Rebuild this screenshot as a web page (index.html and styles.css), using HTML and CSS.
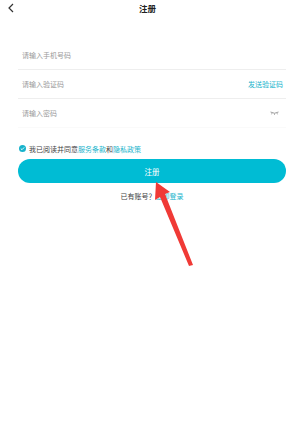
FILE: index.html
```html
<!DOCTYPE html>
<html lang="zh">
<head>
<meta charset="utf-8">
<link rel="stylesheet" href="styles.css">
</head>
<body>
<div class="page">
  <header class="topbar">
    <svg class="back" width="8" height="10" viewBox="0 0 8 10"><path d="M6 1 L2 5 L6 9" fill="none" stroke="#333" stroke-width="1.2"/></svg>
    <div class="title">注册</div>
  </header>
  <div class="form">
    <div class="row">请输入手机号码</div>
    <div class="row"><span>请输入验证码</span><span class="link">发送验证码</span></div>
    <div class="row nob"><span>请输入密码</span>
      <svg class="eye" width="9" height="4" viewBox="0 0 9 4"><path d="M0.5 1 Q4.5 3.5 8.5 1 M2 2.2 L1.5 3.3 M4.5 2.8 L4.5 3.8 M7 2.2 L7.5 3.3" fill="none" stroke="#777" stroke-width="0.7"/></svg>
    </div>
    <div class="agree">
      <svg class="check" width="7" height="7" viewBox="0 0 7 7"><circle cx="3.5" cy="3.5" r="3.5" fill="#17b3cc"/><path d="M1.8 3.6 L3 4.7 L5.2 2.4" fill="none" stroke="#fff" stroke-width="0.9"/></svg>
      <span>我已阅读并同意<span class="link">服务条款</span>和<span class="link">隐私政策</span></span>
    </div>
    <button class="btn">注册</button>
    <div class="login">已有账号？<span class="link">立即登录</span></div>
  </div>
  <svg class="arrow" width="295" height="443" viewBox="0 0 295 443"><path d="M156 182 L170 192 L165 194 L193 265 L189 266 L160 197 L155 200 Z" fill="#f03a36"/></svg>
</div>
</body>
</html>
```
FILE: styles.css
```css
* { box-sizing: border-box; }
body { margin: 0; background: #fff; font-family: "Noto Sans CJK SC", "Noto Sans", sans-serif; }
.page { position: relative; width: 295px; height: 443px; overflow: hidden; }
.topbar { position: relative; height: 17px; display: flex; align-items: center; justify-content: center; }
.back { position: absolute; left: 7px; top: 3px; }
.title { font-size: 8.5px; font-weight: bold; color: #222; line-height: 17px; }
.form { padding: 24px 9px 0 18px; }
.row { height: 29px; display: flex; align-items: center; justify-content: space-between; border-bottom: 1px solid #eeeeee; font-size: 7px; color: #9a9a9a; padding-left: 4px; padding-right: 3px; }
.row.nob { border-bottom-color: #fafafa; }
.link { color: #19b4cc; }
.eye { margin-right: 4px; }
.agree { display: flex; align-items: center; gap: 3px; margin-top: 16px; height: 9px; font-size: 7px; color: #444; padding-left: 1px; }
.btn { display: block; width: 100%; height: 24px; margin-top: 6px; border: 0; border-radius: 12px; background: #00bcd4; color: #fff; font-family: inherit; font-size: 7.5px; padding: 0; }
.login { text-align: center; margin-top: 8px; font-size: 7px; color: #444; line-height: 10px; }
.arrow { position: absolute; left: 0; top: 0; }
```
